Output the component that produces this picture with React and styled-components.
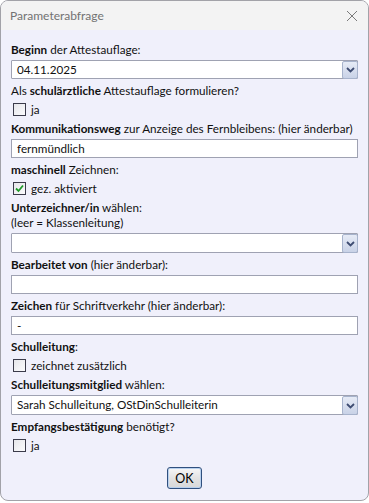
import React from 'react';
import styled, { createGlobalStyle } from 'styled-components';

const Global = createGlobalStyle`
	html, body {
		margin: 0;
		padding: 0;
		background: #ffffff;
	}
	* {
		box-sizing: border-box;
	}
`;

const Window = styled.div`
	width: 369px;
	height: 501px;
	border: 1px solid #a2a2a8;
	border-radius: 8px;
	overflow: hidden;
	display: flex;
	flex-direction: column;
	background: #f0f0fb;
	font-family: Lato, 'Liberation Sans', sans-serif;
	font-size: 11.7px;
	color: #111;
`;

const TitleBar = styled.div`
	height: 29px;
	flex: none;
	background: #f3f3f3;
	display: flex;
	align-items: center;
	justify-content: space-between;
	padding: 0 10px 0 9px;
	color: #727272;
	font-size: 12px;
`;

const Body = styled.div`
	flex: 1;
	display: flex;
	flex-direction: column;
	padding: 12px 10px 0 10px;
`;

const Label = styled.div`
	height: 15px;
	line-height: 15px;
	white-space: nowrap;
	b {
		font-weight: 700;
	}
`;

const TextBox = styled.div`
	height: 19px;
	margin: 3px 0 4px;
	border: 1px solid #9fa2b2;
	background: #ffffff;
	line-height: 17px;
	padding: 0 5px;
`;

const Combo = styled.div`
	height: ${(p) => (p.$tall ? 20 : 19)}px;
	margin: 3px 0 4px;
	display: flex;
	border: 1px solid #9fa2b2;
	background: #ffffff;
	border-radius: 1px;
`;

const ComboText = styled.div`
	flex: 1;
	line-height: 17px;
	padding: 0 5px;
`;

const ComboButton = styled.div`
	width: 16px;
	margin: 0 -1px -1px 0;
	border: 1px solid #a7b3cc;
	border-radius: 2px;
	background: linear-gradient(#e6ebf6, #c9d2e7);
	display: flex;
	align-items: center;
	justify-content: center;
	svg {
		display: block;
	}
`;

const CheckRow = styled.div`
	height: 18px;
	margin: 2px 0 3px;
	display: flex;
	align-items: center;
	gap: 5px;
	padding-left: 2px;
`;

const Box = styled.div`
	width: 13px;
	height: 13px;
	border: 1px solid #3b3b4a;
	background: linear-gradient(135deg, #e6e6ea, #fbfbfd);
	display: flex;
	align-items: center;
	justify-content: center;
`;

const Footer = styled.div`
	display: flex;
	justify-content: center;
	margin-top: 10px;
`;

const OkButton = styled.button`
	width: 35px;
	height: 22px;
	padding: 0;
	border: 1px solid #30507e;
	border-radius: 3px;
	box-shadow: inset 0 0 0 1px #b8d0ee;
	background: linear-gradient(#f7f7f7, #e3e3e3 50%, #d8d8d8);
	font-family: inherit;
	font-size: 12.5px;
	color: #000;
`;

const Chevron = () => (
	<svg width="9" height="6" viewBox="0 0 9 6">
		<path d="M1 1 L4.5 4.5 L8 1" fill="none" stroke="#3e4c72" strokeWidth="1.8" />
	</svg>
);

const Check = () => (
	<svg width="11" height="11" viewBox="0 0 11 11">
		<path d="M2 5.5 L4.5 8 L9 2.5" fill="none" stroke="#1f9a2a" strokeWidth="1.8" />
	</svg>
);

const Close = () => (
	<svg width="12" height="12" viewBox="0 0 12 12">
		<path d="M1 1 L11 11 M11 1 L1 11" stroke="#7a7a7a" strokeWidth="1" />
	</svg>
);

const Checkbox = ({ checked, children }) => (
	<CheckRow>
		<Box>{checked && <Check />}</Box>
		<span>{children}</span>
	</CheckRow>
);

const Dropdown = ({ value, tall }) => (
	<Combo $tall={tall}>
		<ComboText>{value}</ComboText>
		<ComboButton>
			<Chevron />
		</ComboButton>
	</Combo>
);

const App = () => {
	return (
		<>
			<Global />
			<Window>
				<TitleBar>
					<span>Parameterabfrage</span>
					<Close />
				</TitleBar>
				<Body>
					<Label>
						<b>Beginn</b> der Attestauflage:
					</Label>
					<Dropdown value="04.11.2025" />
					<Label>
						Als <b>schulärztliche</b> Attestauflage formulieren?
					</Label>
					<Checkbox>ja</Checkbox>
					<Label>
						<b>Kommunikationsweg</b> zur Anzeige des Fernbleibens: (hier änderbar)
					</Label>
					<TextBox>fernmündlich</TextBox>
					<Label>
						<b>maschinell</b> Zeichnen:
					</Label>
					<Checkbox checked>gez. aktiviert</Checkbox>
					<Label>
						<b>Unterzeichner/in</b> wählen:
					</Label>
					<Label>(leer = Klassenleitung)</Label>
					<Dropdown value="" tall />
					<Label>
						<b>Bearbeitet von</b> (hier änderbar):
					</Label>
					<TextBox />
					<Label>
						<b>Zeichen</b> für Schriftverkehr (hier änderbar):
					</Label>
					<TextBox>-</TextBox>
					<Label>
						<b>Schulleitung</b>:
					</Label>
					<Checkbox>zeichnet zusätzlich</Checkbox>
					<Label>
						<b>Schulleitungsmitglied</b> wählen:
					</Label>
					<Dropdown value="Sarah Schulleitung, OStDinSchulleiterin" tall />
					<Label>
						<b>Empfangsbestätigung</b> benötigt?
					</Label>
					<Checkbox>ja</Checkbox>
					<Footer>
						<OkButton>OK</OkButton>
					</Footer>
				</Body>
			</Window>
		</>
	);
};

export default App;
